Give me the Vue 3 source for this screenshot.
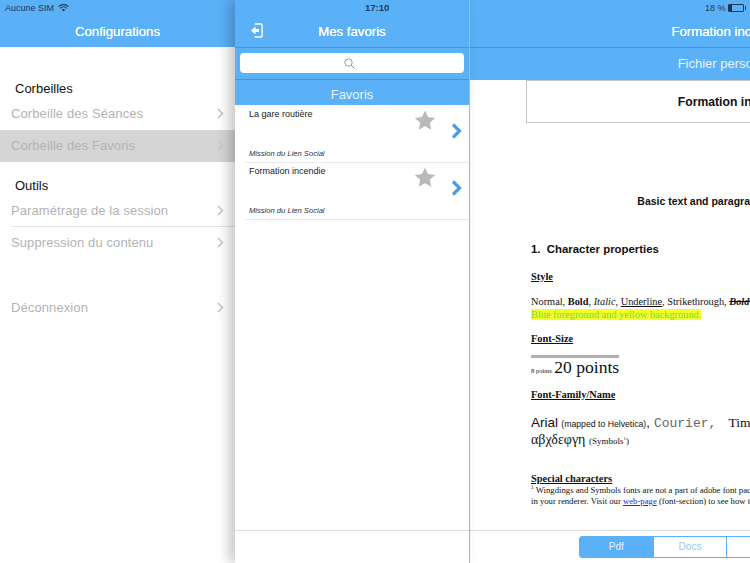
<template>
  <div class="ipad">
    <div class="status">
      <div class="st-left">
        Aucune SIM
        <svg class="wifi" width="11" height="8" viewBox="0 0 11 8">
          <path d="M0.5 2.6 A7.2 7.2 0 0 1 10.5 2.6 M2.2 4.3 A4.8 4.8 0 0 1 8.8 4.3" fill="none" stroke="#1d3a55" stroke-width="1.1" />
          <path d="M3.8 5.8 A2.4 2.4 0 0 1 7.2 5.8 L5.5 7.6 Z" fill="#1d3a55" />
        </svg>
      </div>
      <div class="st-time">17:10</div>
      <div class="st-right">
        18 %
        <span class="batt"><i /></span>
      </div>
    </div>

    <section class="config">
      <header class="nav">Configurations</header>
      <div class="menu">
        <template v-for="g in groups" :key="g.title">
          <h3 class="group" :class="g.cls">{{ g.title }}</h3>
          <div
            v-for="r in g.rows"
            :key="r.label"
            class="row"
            :class="{ selected: r.selected, line: r.line }"
          >
            <span>{{ r.label }}</span>
            <svg width="7" height="11" viewBox="0 0 7 11"><path d="M1 1l4.5 4.5L1 10" fill="none" stroke="#bdbdbd" stroke-width="1.3" /></svg>
          </div>
        </template>
        <div class="row logout">
          <span>Déconnexion</span>
          <svg width="7" height="11" viewBox="0 0 7 11"><path d="M1 1l4.5 4.5L1 10" fill="none" stroke="#bdbdbd" stroke-width="1.3" /></svg>
        </div>
      </div>
    </section>

    <section class="favs">
      <header class="nav nav-line">
        <svg class="exit" width="13" height="15" viewBox="0 0 13 15">
          <path d="M5 1h6.5a1 1 0 0 1 1 1v11a1 1 0 0 1-1 1H5" fill="none" stroke="#fff" stroke-width="1.4" transform="translate(-0.4 0)" />
          <path d="M1 7.5L5.5 3.6V6H9v3H5.5v2.4z" fill="#fff" />
        </svg>
        Mes favoris
      </header>
      <div class="search">
        <div class="search-box">
          <svg width="11" height="11" viewBox="0 0 11 11">
            <circle cx="4.5" cy="4.5" r="3.7" fill="none" stroke="#8e8e93" stroke-width="0.9" />
            <path d="M7.3 7.3L10.4 10.4" stroke="#8e8e93" stroke-width="1" />
          </svg>
        </div>
      </div>
      <div class="fav-title">Favoris</div>
      <div class="fav-list">
        <div v-for="f in favs" :key="f" class="fav">
          <div class="fav-name">{{ f }}</div>
          <div class="fav-org">Mission du Lien Social</div>
          <svg class="star" width="22" height="20" viewBox="0 0 22 20">
            <path d="M11 0.5l3 6.6 7.2.8-5.4 4.8 1.5 7.1L11 16.2l-6.3 3.6 1.5-7.1L.8 7.9 8 7.1z" fill="#b9b9b9" />
          </svg>
          <svg class="go" width="13" height="16" viewBox="0 0 13 16">
            <path d="M3 1.5L9.5 8L3 14.5" fill="none" stroke="#4a9ee0" stroke-width="3.2" />
          </svg>
        </div>
      </div>
      <div class="fav-foot" />
    </section>

    <section class="viewer">
      <header class="nav nav-line">Formation incendie</header>
      <div class="subnav">Fichier personnel</div>
      <div class="doc">
        <div class="doc-box">Formation incendie</div>
        <div class="doc-title">Basic text and paragraph formatting</div>
        <h2 class="doc-h1">1.&nbsp; Character properties</h2>
        <h4 class="doc-h4 style-h">Style</h4>
        <p class="doc-p normal">
          Normal, <b>Bold</b>, <i>Italic</i>, <u>Underline</u>, Strikethrough, <b><i><s>Bold italic strikethrough</s></i></b>
        </p>
        <p class="doc-p"><span class="hl">Blue foreground and yellow background.</span></p>
        <h4 class="doc-h4 size-h">Font-Size</h4>
        <div class="size-line"><small>8 points</small> 20 points</div>
        <h4 class="doc-h4 fam-h">Font-Family/Name</h4>
        <div class="fam">
          <span class="arial">Arial</span> <span class="arial-s">(mapped to Helvetica)</span><span class="arial-c">,</span>
          <span class="cour">Courier,</span> <span class="times">Times New Roman</span>
        </div>
        <div class="sym">αβχδεφγη <small>(Symbols<sup>1</sup>)</small></div>
        <h4 class="doc-h4 spec-h">Special characters</h4>
        <p class="doc-p note"><sup>1</sup> Wingdings and Symbols fonts are not a part of adobe font package and may not be displayed</p>
        <p class="doc-p note">in your renderer. Visit our <a>web-page</a> (font-section) to see how to embed them.</p>
      </div>
      <footer class="tabs">
        <div class="seg">
          <span class="on">Pdf</span>
          <span>Docs</span>
          <span>Liens</span>
        </div>
      </footer>
    </section>
  </div>
</template>

<script setup>
const groups = [
  {
    title: 'Corbeilles',
    cls: 'g1',
    rows: [
      { label: 'Corbeille des Séances' },
      { label: 'Corbeille des Favoris', selected: true },
    ],
  },
  {
    title: 'Outils',
    cls: 'g2',
    rows: [
      { label: 'Paramétrage de la session', line: true },
      { label: 'Suppression du contenu' },
    ],
  },
]
const favs = ['La gare routière', 'Formation incendie']
</script>

<style>
html, body { margin: 0; overflow: hidden; }
</style>

<style scoped>
.ipad {
  position: relative;
  display: flex;
  width: 750px;
  height: 563px;
  overflow: hidden;
  background: #fff;
  font-family: "Liberation Sans", Arial, sans-serif;
}
.status {
  position: absolute;
  top: 0;
  left: 0;
  width: 750px;
  height: 16px;
  z-index: 5;
  font-size: 9px;
  line-height: 16px;
  color: #1d3a55;
}
.st-left { position: absolute; left: 5px; top: 0; display: flex; align-items: center; gap: 4px; height: 16px; }
.st-time { position: absolute; left: 365px; top: 0; font-weight: 700; font-size: 9.5px; }
.st-right { position: absolute; left: 705px; top: 0; display: flex; align-items: center; gap: 2px; height: 16px; }
.batt {
  display: block;
  position: relative;
  width: 14px;
  height: 6px;
  border: 1px solid #1d3a55;
  border-radius: 1px;
}
.batt i { display: block; width: 3px; height: 6px; background: #1d3a55; }
.batt::after {
  content: "";
  position: absolute;
  right: -3px;
  top: 1px;
  width: 1px;
  height: 4px;
  background: #1d3a55;
}
.nav {
  position: relative;
  flex: none;
  height: 47px;
  box-sizing: border-box;
  padding-top: 20px;
  background: #5bb1f8;
  color: #fff;
  font-size: 13.2px;
  line-height: 24px;
  text-align: center;
  text-shadow: 0 0 0.4px #fff;
}
.nav-line { height: 48px; border-bottom: 1px solid #4c94cf; }

.config { flex: none; width: 235px; height: 563px; }
.menu { padding-top: 33px; }
.group {
  margin: 0;
  padding-left: 15px;
  font-size: 13px;
  font-weight: 400;
  line-height: 18px;
  color: #111;
}
.g2 { margin-top: 15px; }
.row {
  position: relative;
  display: flex;
  align-items: center;
  justify-content: space-between;
  height: 32px;
  padding: 0 11px 2px;
  box-sizing: border-box;
  font-size: 13px;
  letter-spacing: 0.1px;
  color: #b3b3b3;
}
.row.selected { background: #d5d5d5; }
.row.selected svg path { stroke: #c6c6c6; }
.row.line::after {
  content: "";
  position: absolute;
  left: 11px;
  right: 0;
  bottom: 0;
  height: 1px;
  background: #e4e4e4;
}
.logout { margin-top: 33px; }

.favs {
  flex: none;
  display: flex;
  flex-direction: column;
  position: relative;
  width: 235px;
  height: 563px;
  box-sizing: border-box;
  border-right: 1px solid #b5b5b5;
  background: #fff;
  box-shadow: -6px 0 12px rgba(0, 0, 0, 0.22);
  z-index: 2;
}
.exit { position: absolute; left: 15px; top: 23px; }
.search {
  flex: none;
  height: 32px;
  box-sizing: border-box;
  padding: 5px 5px 0;
  background: #5bb1f8;
  border-bottom: 1px solid #4c94cf;
}
.search-box {
  display: flex;
  align-items: center;
  justify-content: center;
  height: 20px;
  background: #fff;
  border-radius: 4px;
}
.search-box svg { margin-right: 6px; }
.fav-title {
  flex: none;
  height: 25px;
  background: #5bb1f8;
  color: #e6f3fe;
  font-size: 13px;
  line-height: 29px;
  text-align: center;
}
.fav-list { padding-top: 1px; }
.fav {
  position: relative;
  height: 57px;
  margin-left: 10px;
  border-bottom: 1px solid #e9e9e9;
  box-sizing: border-box;
  padding: 2px 4px 0;
  font-size: 9px;
  color: #222;
}
.fav-name { line-height: 12px; }
.fav-org {
  position: absolute;
  left: 4px;
  bottom: 3px;
  font-size: 7.6px;
  font-style: italic;
  color: #333;
  line-height: 10px;
}
.star { position: absolute; left: 169px; top: 4px; }
.go { position: absolute; left: 205px; top: 17px; }
.fav-foot {
  margin-top: auto;
  height: 33px;
  border-top: 1px solid #dcdcdc;
  box-sizing: border-box;
}

.viewer {
  flex: none;
  display: flex;
  flex-direction: column;
  width: 515px;
  height: 563px;
}
.subnav {
  flex: none;
  height: 32px;
  background: #5bb1f8;
  color: #e8f4fe;
  font-size: 13px;
  line-height: 32px;
  text-align: center;
}
.doc {
  flex: 1;
  min-height: 0;
  padding: 0 57px 0 61px;
  font-family: "Liberation Serif", "Times New Roman", serif;
  color: #111;
  overflow: hidden;
  white-space: nowrap;
}
.doc-box {
  box-sizing: border-box;
  height: 43px;
  margin-left: -5px;
  padding-left: 14px;
  border: 1px solid #c6c6c6;
  font: 700 12.2px/42px "Liberation Sans", Arial, sans-serif;
  text-align: center;
}
.doc-title {
  margin-top: 71px;
  padding-right: 4px;
  font: 700 10.5px/14px "Liberation Sans", Arial, sans-serif;
  text-align: center;
}
.doc-h1 {
  margin: 34px 0 0;
  font: 700 11.4px/14px "Liberation Sans", Arial, sans-serif;
}
.doc-h4 {
  margin: 0;
  font-size: 10.4px;
  line-height: 12px;
  font-weight: 700;
  text-decoration: underline;
}
.style-h { margin-top: 15px; }
.doc-p { margin: 0; font-size: 10.35px; line-height: 13px; }
.normal { margin-top: 12px; }
.hl { background: #f4ff2a; color: #6fdc3c; }
.size-h { margin-top: 12px; }
.size-line {
  margin-top: 10px;
  width: 88px;
  border-top: 3px solid #b0b0b0;
  font-size: 17.6px;
  line-height: 18px;
}
.size-line small { font-size: 6.5px; margin-right: -2px; }
.fam-h { margin-top: 9px; }
.fam { margin-top: 14px; height: 16px; font-size: 13px; line-height: 16px; }
.arial { font-family: "Liberation Sans", Arial, sans-serif; font-size: 13.5px; }
.arial-s { font-family: "Liberation Sans", Arial, sans-serif; font-size: 8.7px; }
.arial-c { font-family: "Liberation Sans", Arial, sans-serif; font-size: 13px; margin-right: 4px; }
.cour { font-family: "Liberation Mono", "Courier New", monospace; color: #666; font-size: 13px; margin-right: 9px; }
.times { font-size: 13.5px; }
.sym { height: 16px; margin-top: 1px; font-size: 14px; line-height: 16px; }
.sym small { font-size: 9px; }
.sym sup { font-size: 5px; line-height: 0; }
.spec-h { margin-top: 25px; }
.note { line-height: 11px; font-size: 8.7px; }
.note sup { font-size: 5.5px; line-height: 0; }
.note a { color: #2a2ad8; text-decoration: underline; }
.tabs {
  flex: none;
  height: 33px;
  box-sizing: border-box;
  padding: 5px 0 0 109px;
  border-top: 1px solid #dcdcdc;
}
.seg {
  display: flex;
  width: 222px;
  height: 22px;
  box-sizing: border-box;
  border: 1px solid #5bb1f8;
  border-radius: 3px;
  font-size: 10px;
  line-height: 20px;
  color: #8cc8f9;
  text-align: center;
}
.seg span { flex: 1; border-left: 1px solid #5bb1f8; }
.seg span:first-child { border-left: none; }
.seg .on { background: #5bb1f8; color: #e6f3fe; }
</style>
